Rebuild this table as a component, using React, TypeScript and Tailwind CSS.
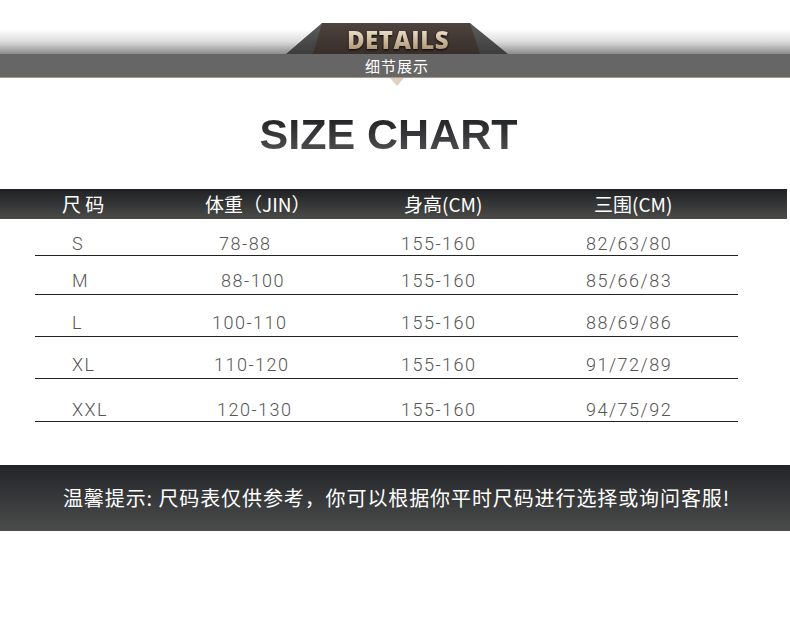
import React from "react";

const rows = [
    { size: "S", weight: "78-88", height: "155-160", body: "82/63/80", h: "h-[37px]", pb: "pb-[1px]", wl: "pl-[34px]" },
    { size: "M", weight: "88-100", height: "155-160", body: "85/66/83", h: "h-[39px]", pb: "pb-[3px]", wl: "pl-[36px]" },
    { size: "L", weight: "100-110", height: "155-160", body: "88/69/86", h: "h-[42px]", pb: "pb-[3px]", wl: "pl-[27px]" },
    { size: "XL", weight: "110-120", height: "155-160", body: "91/72/89", h: "h-[42px]", pb: "pb-[3px]", wl: "pl-[29px]" },
    { size: "XXL", weight: "120-130", height: "155-160", body: "94/75/92", h: "h-[43px]", pb: "pb-[1px]", wl: "pl-[32px]" },
];

const Badge = () => (
    <div className="relative w-[222px] h-[31px]">
        <svg className="absolute inset-0" width="222" height="31" viewBox="0 0 222 31">
            <defs>
                <linearGradient id="wing" x1="0" y1="0" x2="0" y2="1">
                    <stop offset="0" stopColor="#5e5e5e" />
                    <stop offset="1" stopColor="#3c3c3c" />
                </linearGradient>
                <linearGradient id="face" x1="0" y1="0" x2="0" y2="1">
                    <stop offset="0" stopColor="#4e433e" />
                    <stop offset="1" stopColor="#382e2a" />
                </linearGradient>
            </defs>
            <polygon points="36,0 184,0 222,31 0,31" fill="url(#wing)" />
            <polygon points="36,0 184,0 194,31 27,31" fill="url(#face)" />
        </svg>
        <div className="relative pt-[5px] pl-[2px] text-center">
            <span className="inline-block bg-linear-to-b from-[#f3e8d2] to-[#a88f6c] bg-clip-text text-transparent font-['Open_Sans',sans-serif] font-extrabold text-[24px] leading-[24px] tracking-[0.5px] drop-shadow-[0_1px_1px_rgba(0,0,0,0.9)]">
                DETAILS
            </span>
        </div>
    </div>
);

export default function App() {
    return (
        <div className="w-[790px] h-[631px] bg-white overflow-hidden font-['Noto_Sans_CJK_SC',sans-serif]">
            {/* top title strip */}
            <div className="h-[23px]" />
            <div className="h-[31px] flex justify-center pl-[4px] bg-[linear-gradient(to_bottom,#ffffff_20%,#dcdcdc_60%,#8c8c8c_100%)]">
                <Badge />
            </div>
            <div className="h-[23px] bg-[#666666] text-white text-[15px] leading-[23px] tracking-[1px] text-center pl-[4px]">
                细节展示
            </div>
            <div className="h-px bg-[#a89a88]" />
            <div className="flex justify-center pl-[4px]">
                <div className="w-0 h-0 border-l-[7px] border-r-[7px] border-t-[8px] border-l-transparent border-r-transparent border-t-[#ddd1c0]" />
            </div>

            <div className="mt-[27px] flex justify-center pr-[13px]">
                <h1 className="bg-linear-to-b from-[#1c1d20] to-[#555555] bg-clip-text text-transparent font-['Liberation_Sans',Arial,sans-serif] font-bold text-[43px] leading-[43px]">
                    SIZE CHART
                </h1>
            </div>

            {/* table */}
            <div className="mt-[33px] w-[787px] h-[30px] bg-linear-to-b from-[#1f2124] to-[#4b4b49] grid grid-cols-[205px_199px_190px_1fr] items-center text-white text-[19px] leading-[30px]">
                <div className="pl-[62px]">尺 码</div>
                <div>体重（JIN）</div>
                <div>身高(CM)</div>
                <div>三围(CM)</div>
            </div>

            <div className="ml-[35px] w-[703px] font-['Roboto',sans-serif] font-light text-[18px] leading-[20px] tracking-[1.5px] text-[#555555]">
                {rows.map((r) => (
                    <div key={r.size} className={`${r.h} ${r.pb} grid grid-cols-[150px_180px_190px_1fr] items-end border-b border-[#222222]`}>
                        <div className="pl-[37px]">{r.size}</div>
                        <div className={r.wl}>{r.weight}</div>
                        <div className="pl-[36px]">{r.height}</div>
                        <div className="pl-[31px]">{r.body}</div>
                    </div>
                ))}
            </div>

            <div className="mt-[43px] h-[66px] bg-linear-to-b from-[#222528] to-[#4c4c4c] flex items-center justify-center pl-[3px] text-white text-[20px] tracking-[0.9px]">
                温馨提示: 尺码表仅供参考，你可以根据你平时尺码进行选择或询问客服!
            </div>
        </div>
    );
}
